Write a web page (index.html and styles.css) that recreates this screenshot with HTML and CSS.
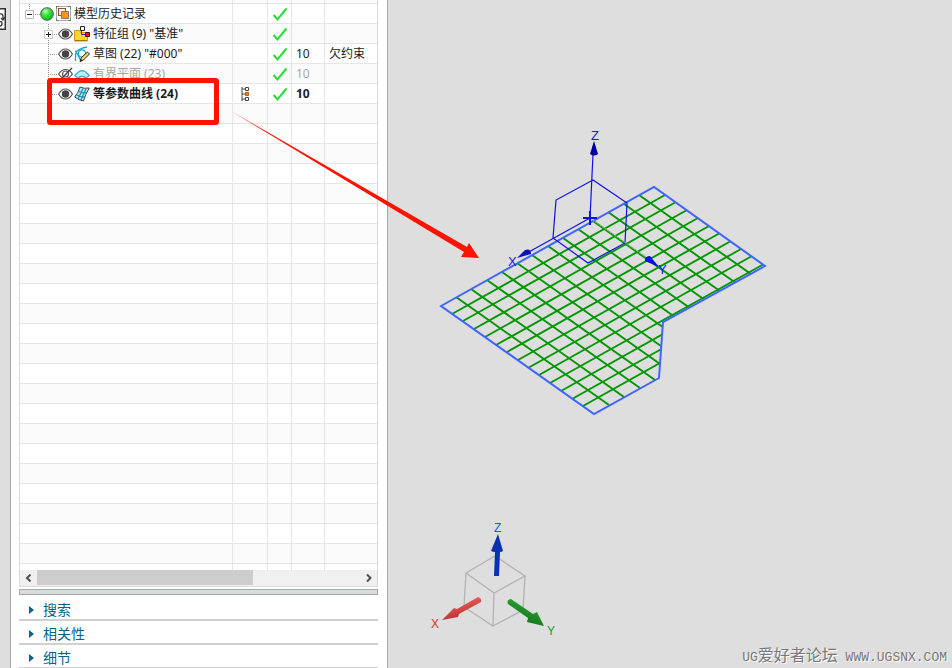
FILE: index.html
```html
<!DOCTYPE html>
<html lang="zh-CN">
  <head>
    <meta charset="UTF-8" />
    <meta name="viewport" content="width=device-width, initial-scale=1.0" />
    <title>模型历史记录</title>
    <link rel="stylesheet" href="styles.css">
  </head>
  <body>
    <!-- Shared icons -->
    <svg class="icon-defs" width="0" height="0" aria-hidden="true">
      <symbol id="check" viewBox="0 0 16 16">
        <path d="M1.500 9l4 4.500L14.500 2.500" fill="none" stroke="#26df38" stroke-width="2" />
      </symbol>
      <symbol id="eye" viewBox="0 0 15 14">
        <path d="M.6 7Q3.500 2 7.500 2t6.900 5q-2.900 5-6.900 5T.6 7z" fill="#fff" stroke="#555" stroke-width="1.200" />
        <circle cx="7.500" cy="7" r="3.700" fill="#444" />
      </symbol>
      <symbol id="leaf" viewBox="0 0 14 20">
        <path d="M4.500 0v20M6 10.500h8" fill="none" stroke="#999" stroke-dasharray="1 1" />
      </symbol>
      <symbol id="leaf-end" viewBox="0 0 14 20">
        <path d="M4.500 0v11M6 10.500h8" fill="none" stroke="#999" stroke-dasharray="1 1" />
      </symbol>
    </svg>

    <main class="app">
      <aside class="side-bar">
        <button class="side-tab" aria-label="历史记录">
          <svg width="7" height="22" viewBox="0 0 7 22">
            <path d="M0 .75h5.250v20.500H0" fill="#fff" stroke="#333" stroke-width="1.500" />
            <path d="M0 6q3-1 3 3v2M1 10l2 2 2-3M0 14q2-1 2 1.500T0 18" fill="none" stroke="#333" stroke-width="1.300" />
          </svg>
        </button>
      </aside>

      <section class="navigator">
        <div class="tree">
          <div class="tree-body">
            <table class="tree-table">
              <colgroup>
                <col class="col-name">
                <col class="col-link">
                <col class="col-check">
                <col class="col-layer">
                <col>
              </colgroup>
              <tbody>
                <tr class="is-cut"><td></td><td></td><td></td><td></td><td></td></tr>
                <tr>
                  <td>
                    <div class="node is-root">
                      <button class="expander" aria-label="折叠">
                        <svg width="15" height="20" viewBox="0 0 15 20">
                          <path d="M4.500 0v6M10 10.500h5" fill="none" stroke="#999" stroke-dasharray="1 1" />
                          <path d="M.5 6.500h8v8h-8z" fill="#fff" stroke="#bbb" />
                          <path d="M2 10.500h5" stroke="#222" />
                        </svg>
                      </button>
                      <svg width="14" height="14" viewBox="0 0 14 14">
                        <defs>
                          <radialGradient id="ball" cx=".38" cy=".3" r=".7">
                            <stop offset="0" stop-color="#b8ffb0" />
                            <stop offset=".5" stop-color="#30e030" />
                            <stop offset="1" stop-color="#10c020" />
                          </radialGradient>
                        </defs>
                        <circle cx="7" cy="7" r="6.300" fill="url(#ball)" stroke="#555" />
                      </svg>
                      <svg class="root-icon" width="15" height="15" viewBox="0 0 15 15">
                        <path d="M.5.500h14v14H.5z" fill="#fff" stroke="#aaa" />
                        <path d="M2.500 2.500h7v7h-7z" fill="#fff3e0" stroke="#965526" stroke-width="1.200" />
                        <path d="M5.500 5.500h7v7h-7z" fill="#ff941c" stroke="#777" />
                        <path d="M0 3V0h3M12 0h3v3M15 12v3h-3M3 15H0v-3" fill="none" stroke="#555" />
                      </svg>
                      <span class="label">模型历史记录</span>
                    </div>
                  </td>
                  <td></td>
                  <td><svg class="check"><use href="#check" /></svg></td>
                  <td></td>
                  <td></td>
                </tr>
                <tr>
                  <td>
                    <div class="node">
                      <button class="expander" aria-label="展开">
                        <svg width="14" height="20" viewBox="0 0 14 20">
                          <path d="M4.500 0v20M10 10.500h4" fill="none" stroke="#999" stroke-dasharray="1 1" />
                          <path d="M.5 6.500h8v8h-8z" fill="#fff" stroke="#ccc" />
                          <path d="M2 10.500h5M4.500 8v5" stroke="#222" />
                        </svg>
                      </button>
                      <button class="eye" aria-label="隐藏"><svg width="15" height="14"><use href="#eye" /></svg></button>
                      <svg class="node-icon" viewBox="0 0 16 16">
                        <path d="M.5 4.500h5l1 2h7v8.500H.5z" fill="#ffd52e" stroke="#d69a00" />
                        <path d="M1 14.500h12" stroke="#a87400" />
                        <path d="M7.500 3v5.500h4" fill="none" stroke="#1020e0" />
                        <path d="M6.500.500h4v4h-4z" fill="#fff" stroke="#222" />
                        <path d="M11.500 6.500h4v4h-4z" fill="#e02020" stroke="#500" />
                      </svg>
                      <span class="label">特征组 (9) "基准"</span>
                    </div>
                  </td>
                  <td></td>
                  <td><svg class="check"><use href="#check" /></svg></td>
                  <td></td>
                  <td></td>
                </tr>
                <tr>
                  <td>
                    <div class="node">
                      <svg class="branch"><use href="#leaf" /></svg>
                      <button class="eye" aria-label="隐藏"><svg width="15" height="14"><use href="#eye" /></svg></button>
                      <svg class="node-icon" viewBox="0 0 16 16">
                        <path d="M1.500 15V8Q2.500 3 13 1M1.500 4.500L7 15" fill="none" stroke="#10a8c8" stroke-width="1.300" />
                        <circle cx="8" cy="7.500" r="3.600" fill="none" stroke="#10a8c8" stroke-width="1.300" />
                        <path d="M6 15.500l1.500-4 6-5.500 2 2-6 6z" fill="#ffcf70" stroke="#222" />
                        <path d="M6 15.500l.8-2.500 1.700 1.500z" fill="#222" />
                      </svg>
                      <span class="label">草图 (22) "#000"</span>
                    </div>
                  </td>
                  <td></td>
                  <td><svg class="check"><use href="#check" /></svg></td>
                  <td>10</td>
                  <td>欠约束</td>
                </tr>
                <tr class="is-hidden">
                  <td>
                    <div class="node">
                      <svg class="branch"><use href="#leaf" /></svg>
                      <button class="eye" aria-label="显示">
                        <svg width="15" height="14" viewBox="0 0 15 14">
                          <path d="M.6 7Q3.500 2.500 7.500 2.500t6.900 4.500q-2.900 4.500-6.900 4.500T.6 7z" fill="none" stroke="#555" stroke-width="1.200" />
                          <circle cx="7.500" cy="7" r="3" fill="none" stroke="#555" stroke-width="1.200" />
                          <path d="M2 13L14 1" stroke="#444" stroke-width="1.300" />
                        </svg>
                      </button>
                      <svg class="node-icon" viewBox="0 0 16 16">
                        <path d="M.7 9.500L5 5.500q3-1.500 6 0l4.300 4-3.300 2.500Q8 8.500 4 12z" fill="#c0eefa" stroke="#3fb2d0" stroke-width="1.300" />
                      </svg>
                      <span class="label">有界平面 (23)</span>
                    </div>
                  </td>
                  <td></td>
                  <td><svg class="check"><use href="#check" /></svg></td>
                  <td>10</td>
                  <td></td>
                </tr>
                <tr class="is-active">
                  <td>
                    <div class="node">
                      <svg class="branch"><use href="#leaf-end" /></svg>
                      <button class="eye" aria-label="隐藏"><svg width="15" height="14"><use href="#eye" /></svg></button>
                      <svg class="node-icon" viewBox="0 0 16 16">
                        <path d="M6 1q4 2 9.300 1Q11.500 8 9.500 15 5 14.500.7 11 4.500 6.500 6 1z" fill="#b4e6f4" stroke="#444" />
                        <path d="M9 2.500Q6.500 8 4 13M12 3Q9 9 7 14M4.500 5.500q4.500 2 8.500 1M2.500 9q4.500 2.500 8.500 2" fill="none" stroke="#1590ae" stroke-width="1.200" />
                      </svg>
                      <span class="label">等参数曲线 (24)</span>
                    </div>
                  </td>
                  <td>
                    <svg class="link-icon" width="9" height="14" viewBox="0 0 9 14">
                      <path d="M1 0v14M1 2h3M1 7h3M1 12h3" stroke="#444" />
                      <path d="M4.500.500h3v3h-3zM4.500 10.500h3v3h-3z" fill="#fff" stroke="#444" />
                      <path d="M4.500 5.500h3v3h-3z" fill="#f08010" stroke="#b85c10" />
                    </svg>
                  </td>
                  <td><svg class="check"><use href="#check" /></svg></td>
                  <td>10</td>
                  <td></td>
                </tr>
              </tbody>
            </table>
          </div>
          <div class="scroll-bar">
            <button class="scroll-arrow" aria-label="向左">
              <svg width="8" height="8" viewBox="0 0 8 8"><path d="M5.500 .5L2 4 5.500 7.500" fill="none" stroke="#505050" stroke-width="2" /></svg>
            </button>
            <div class="scroll-track"><div class="scroll-thumb"></div></div>
            <button class="scroll-arrow" aria-label="向右">
              <svg width="8" height="8" viewBox="0 0 8 8"><path d="M2 .5L5.500 4 2 7.500" fill="none" stroke="#505050" stroke-width="2" /></svg>
            </button>
          </div>
        </div>

        <div class="splitter"></div>

        <div class="sections">
          <button class="section-button">搜索</button>
          <button class="section-button">相关性</button>
          <button class="section-button">细节</button>
        </div>
      </section>

      <section class="viewport">
        <svg class="scene" viewBox="388 0 564 668" role="img" aria-label="等参数曲线">
          <defs>
            <clipPath id="sheet">
              <path d="M441 306L654 187 765 266 663 322 659 378 594 414z" />
            </clipPath>
            <linearGradient id="red" x1="0" y1="0" x2=".5" y2="1">
              <stop offset=".3" stop-color="#f06060" />
              <stop offset="1" stop-color="#b02828" />
            </linearGradient>
            <linearGradient id="green" x1="1" y1="0" x2=".5" y2="1">
              <stop offset=".2" stop-color="#2aa836" />
              <stop offset="1" stop-color="#137018" />
            </linearGradient>
          </defs>

          <!-- U and V curves, 14 divisions each way -->
          <g clip-path="url(#sheet)" fill="none" stroke="#009600" stroke-width="1.900">
            <path d="M452 314l213-119M463 321l213-119M474 329l213-119M485 337l213-119M496 345l213-119M507 352l213-119M518 360l213-119M528 368l213-119M539 375l213-119M550 383l214-119M561 391l213-119M572 399l213-119M583 406l213-119" />
            <path d="M456 297l153 108M471 289l153 108M487 280l153 108M502 272l153 108M517 263l153 108M532 255l153 108M548 246l153 108M563 238l153 108M578 229l153 108M593 221l153 108M608 212l153 108M624 204l153 108M639 195l153 108" />
          </g>
          <path d="M441 306L654 187 765 266 663 322 659 378 594 414z" fill="none" stroke="#4065ff" stroke-width="2" />

          <!-- Datum coordinate system -->
          <g fill="none" stroke="#1010e8" stroke-width="1.200">
            <path d="M590 218l3-64M593 180l-37 20-3 38 35 25 37-20 2-40z" />
            <path d="M590 218l-63 35" />
            <path d="M590 218l60 42" stroke="#79b879" stroke-dasharray="2 1" />
            <path d="M583 218h14M590 211v14" stroke-width="2" />
          </g>
          <path d="M594 141l4 13q-4 3-8 0z" fill="#0000a0" />
          <path d="M517 258l8-8q6-2 6 4z" fill="#1010b8" />
          <path d="M659 267l-14-6q0-5 5-5z" fill="#0808e8" />
          <text class="axis is-datum" x="591" y="140">Z</text>
          <text class="axis is-datum" x="508" y="266">X</text>
          <text class="axis is-datum" x="658" y="274">Y</text>

          <!-- View triad -->
          <path d="M466 573l29-17 30 20-31 17zM466 573l-2 34 29 19 1-33M525 576l-2 34-30 16" fill="none" stroke="#b2b2b2" stroke-width="1.300" />
          <path d="M498 534l5 17q-1 1-3 1l-1 24h-5l1-24q-2 0-4-1z" fill="#0832b0" />
          <path d="M442 620l12-12 3 1 21-12q4 1 3 5l-22 12-1 3z" fill="url(#red)" />
          <path d="M544 626l-17-4 1-4-20-14q-2-4 3-5l22 15 4-2z" fill="url(#green)" />
          <text class="axis" x="494" y="532" fill="#2055f0">Z</text>
          <text class="axis" x="431" y="628" fill="#d83030">X</text>
          <text class="axis" x="547" y="635" fill="#209a30">Y</text>
        </svg>
        <p class="watermark"><span>UG</span>爱好者论坛<span> WWW.UGSNX.COM</span></p>
      </section>

      <svg class="callout" width="490" height="270" viewBox="0 0 490 270" aria-hidden="true">
        <rect x="49.500" y="80.500" width="167" height="42" rx="1" fill="none" stroke="#ff1200" stroke-width="5" />
        <path d="M231 111L467 247 469 243 479 258 461 257 464 252z" fill="#ff1200" />
      </svg>
    </main>

    <script>
      const body = document.querySelector(".tree-body");
      const rows = document.querySelector(".tree-table tbody");

      // Keep the grid going down to the scroll bar
      function fillRows() {
        while (rows.offsetHeight < body.clientHeight) {
          const row = rows.insertRow();
          for (let i = 0; i < 5; i++) row.insertCell();
        }
      }

      fillRows();
      window.addEventListener("resize", fillRows);
    </script>
  </body>
</html>
```
FILE: styles.css
```css
:root {
  --grey-bg: #dedede;
  --edge: #a8a8a8;
  --grid-line: #e6e6e6;
  --text-color: #1c1c1c;
  --link-color: #006488;
}

*,
*::before,
*::after {
  box-sizing: border-box;
  margin: 0;
  padding: 0;
}

body {
  font-family: "Noto Sans", "Noto Sans CJK SC", sans-serif;
  font-size: 12px;
  color: var(--text-color);
  background-color: var(--grey-bg);
  overflow: hidden;
}

button {
  font: inherit;
  color: inherit;
  background: none;
  border: none;
  cursor: pointer;
}

svg {
  display: block;
  flex-shrink: 0;
}

.icon-defs {
  position: absolute;
}

.app {
  display: flex;
  height: 100vh;
  position: relative;
}

.side-bar {
  width: 11px;
  padding-top: 8px;
  border-right: 1px solid var(--edge);
}

.side-tab {
  display: block;
}

.navigator {
  width: 377px;
  display: flex;
  flex-direction: column;
  padding: 0 9px 0 8px;
  background-color: #fff;
  border-right: 1px solid var(--edge);
}

.tree {
  flex: 1;
  min-height: 0;
  display: flex;
  flex-direction: column;
  border: 1px solid #d8d8d8;
  border-top: none;
}

.tree-body {
  flex: 1;
  min-height: 0;
  overflow: hidden;
}

.tree-table {
  width: 100%;
  table-layout: fixed;
  border-collapse: separate;
  border-spacing: 0;
}

.col-name {
  width: 213px;
}

.col-link {
  width: 35px;
}

.col-check {
  width: 24px;
}

.col-layer {
  width: 33px;
}

.tree-table td {
  height: 20px;
  padding-left: 4px;
  line-height: 19px;
  white-space: nowrap;
  border-right: 1px solid var(--grid-line);
  border-bottom: 1px solid var(--grid-line);
}

.tree-table td:first-child {
  padding-left: 0;
}

.tree-table td:last-child {
  border-right: none;
}

.tree-table tr:nth-child(odd) {
  background-color: #fafafa;
}

.tree-table .is-cut td {
  height: 4px;
}

.node {
  display: flex;
  align-items: center;
  height: 19px;
  padding-left: 24px;
}

.node.is-root {
  padding-left: 5px;
}

.branch {
  width: 14px;
  height: 20px;
}

.node-icon {
  width: 16px;
  height: 16px;
  margin-left: 1px;
}

.root-icon {
  margin-left: 2px;
}

.label {
  margin-left: 3px;
}

.check {
  width: 16px;
  height: 16px;
}

.link-icon {
  margin-left: 4px;
}

.is-hidden {
  color: #a8a8a8;
}

.is-active {
  font-weight: 700;
}

.scroll-bar {
  display: flex;
  height: 16px;
  background-color: #f0f0f0;
}

.scroll-arrow {
  width: 17px;
  display: grid;
  place-content: center;
}

.scroll-track {
  flex: 1;
}

.scroll-thumb {
  width: 67%;
  height: 15px;
  background-color: #cdcdcd;
}

.splitter {
  height: 6px;
  margin-top: 2px;
  background-color: #d9dcd9;
  border: 1px solid #a5a9a7;
}

.sections {
  display: flex;
  flex-direction: column;
  padding-top: 2px;
}

.section-button {
  display: flex;
  align-items: center;
  gap: 9px;
  height: 24px;
  padding: 3px 0 0 10px;
  font-size: 14px;
  line-height: 19px;
  color: var(--link-color);
  border-bottom: 2px solid #d0d0d0;
}

.section-button:last-child {
  height: 23px;
  border-bottom-width: 1px;
}

.section-button::before {
  content: "";
  border: 4px solid transparent;
  border-left: 5px solid var(--link-color);
  border-right: none;
}

.viewport {
  flex: 1;
  min-width: 0;
  position: relative;
}

.scene {
  width: 100%;
  height: 100%;
}

.axis {
  font-family: "Liberation Sans", sans-serif;
  font-size: 12px;
}

.axis.is-datum {
  font-size: 13px;
  fill: #1818e8;
}

.watermark {
  position: absolute;
  right: 5px;
  bottom: 0;
  font-size: 16px;
  line-height: 20px;
  color: #777;
  text-shadow: 1px 1px 0 #fff;
  white-space: pre;
}

.watermark span {
  font-family: "Liberation Mono", monospace;
  font-size: 13px;
}

.callout {
  position: absolute;
  top: 0;
  left: 0;
  pointer-events: none;
}
```
